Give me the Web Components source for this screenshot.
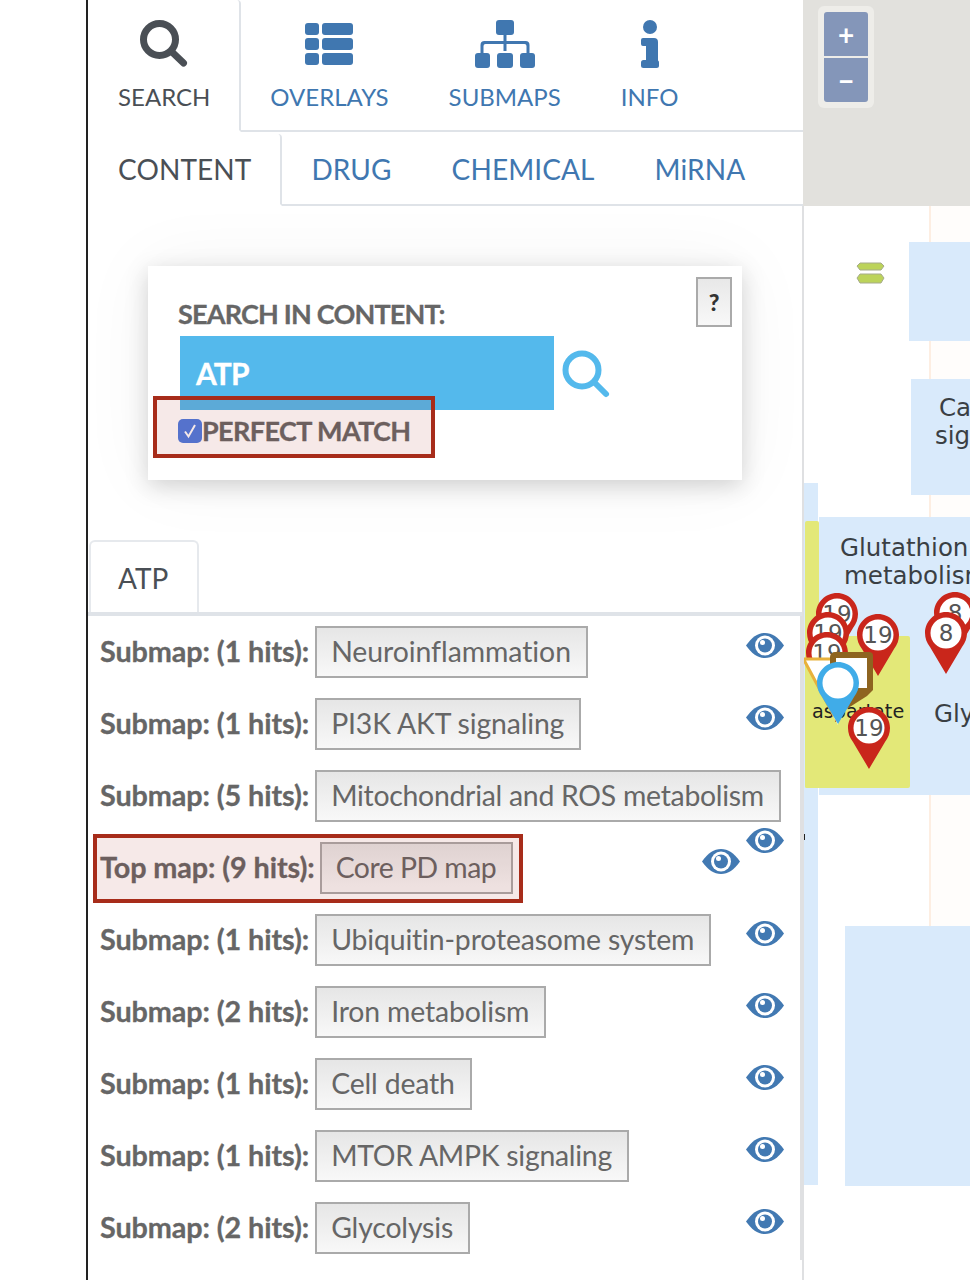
<!DOCTYPE html>
<html lang="en">
<head>
<meta charset="utf-8">
<title>Search</title>
<style>
  html, body { margin: 0; padding: 0; background: #fff; }
  body { font-family: 'Lato', 'Liberation Sans', sans-serif; }
</style>
</head>
<body>
<app-shell>
  <tab-bar slot="panel" size="top">
    <nav-tab active label="SEARCH" icon="search"></nav-tab>
    <nav-tab label="OVERLAYS" icon="overlays"></nav-tab>
    <nav-tab label="SUBMAPS" icon="submaps"></nav-tab>
    <nav-tab label="INFO" icon="info"></nav-tab>
  </tab-bar>
  <tab-bar slot="panel" size="sub">
    <nav-tab active label="CONTENT"></nav-tab>
    <nav-tab label="DRUG"></nav-tab>
    <nav-tab label="CHEMICAL"></nav-tab>
    <nav-tab label="MiRNA"></nav-tab>
  </tab-bar>
  <search-card slot="panel"></search-card>
  <result-tab slot="panel">ATP</result-tab>
  <hit-list slot="panel">
    <hit-row kind="Submap" hits="1" name="Neuroinflammation" track="-.05"></hit-row>
    <hit-row kind="Submap" hits="1" name="PI3K AKT signaling"></hit-row>
    <hit-row kind="Submap" hits="5" name="Mitochondrial and ROS metabolism" track="-.27" eye-top="58"></hit-row>
    <hit-row kind="Top map" hits="9" name="Core PD map" track="-.5" eye-right="60" highlight></hit-row>
    <hit-row kind="Submap" hits="1" name="Ubiquitin-proteasome system"></hit-row>
    <hit-row kind="Submap" hits="2" name="Iron metabolism"></hit-row>
    <hit-row kind="Submap" hits="1" name="Cell death"></hit-row>
    <hit-row kind="Submap" hits="1" name="MTOR AMPK signaling" track="-.26"></hit-row>
    <hit-row kind="Submap" hits="2" name="Glycolysis"></hit-row>
  </hit-list>
  <map-canvas slot="map"></map-canvas>
</app-shell>

<script>
const ICONS = {
  search: `<svg width="48" height="48" viewBox="0 0 48 48"><circle cx="19.5" cy="19.5" r="16" fill="none" stroke="currentColor" stroke-width="7"/><path d="M32 32l11.5 11" stroke="currentColor" stroke-width="7" stroke-linecap="round"/></svg>`,
  overlays: `<svg width="48" height="48" viewBox="0 0 48 42" fill="currentColor"><rect width="14" height="12" rx="3"/><rect x="17" width="31" height="12" rx="3"/><rect y="15" width="14" height="12" rx="3"/><rect x="17" y="15" width="31" height="12" rx="3"/><rect y="30" width="14" height="12" rx="3"/><rect x="17" y="30" width="31" height="12" rx="3"/></svg>`,
  submaps: `<svg width="60" height="48" viewBox="0 0 60 48" fill="currentColor"><rect x="21" width="18" height="15" rx="3"/><rect y="33" width="15" height="15" rx="3"/><rect x="22" y="33" width="16" height="15" rx="3"/><rect x="45" y="33" width="15" height="15" rx="3"/><path d="M28.500 15h3v6h19a4 4 0 0 1 4 4v8h-3v-7a2 2 0 0 0-2-2h-18v7h-3v-7h-18a2 2 0 0 0-2 2v7h-3v-8a4 4 0 0 1 4-4h19z"/></svg>`,
  info: `<svg width="18" height="48" viewBox="0 0 18 48" fill="currentColor"><circle cx="9" cy="7" r="7"/><path d="M2 18h11a4 4 0 0 1 4 4v20h-12V26H2a2 2 0 0 1-2-2v-4a2 2 0 0 1 2-2z"/><rect y="40" width="18" height="8" rx="2.500"/></svg>`
};

class AppShell extends HTMLElement {
  constructor() {
    super();
    this.attachShadow({ mode: 'open' });
    this.shadowRoot.innerHTML = `
      <style>
        :host { display: flex; width: 970px; height: 1280px; overflow: hidden; background: #fff; }
        .gutter { width: 86px; flex: none; border-right: 2px solid #222; }
        .panel { width: 716px; flex: none; display: flex; flex-direction: column; overflow: hidden; position: relative; }
        .panel::before { content: ''; position: absolute; right: 0; top: 0; width: 1px; height: 206px; background: #e2e1dd; }
        .panel::after { content: ''; position: absolute; right: 0; top: 206px; bottom: 0; width: 2px; background: #dfe0e2; }
        .map { width: 166px; flex: none; position: relative; }
      </style>
      <div class="gutter"></div>
      <div class="panel"><slot name="panel"></slot></div>
      <div class="map"><slot name="map"></slot></div>
    `;
  }
}

class TabBar extends HTMLElement {
  constructor() {
    super();
    this.attachShadow({ mode: 'open' });
    this.shadowRoot.innerHTML = `
      <style>
        :host { display: flex; box-sizing: border-box; border-bottom: 2px solid #dfe3e8; flex: none; }
        :host([size="top"]) { height: 132px; font-size: 24px; }
        :host([size="sub"]) { height: 74px; padding-top: 2px; font-size: 28px; letter-spacing: .1px; }
      </style>
      <slot></slot>
    `;
  }
}

class NavTab extends HTMLElement {
  constructor() {
    super();
    this.attachShadow({ mode: 'open' });
  }
  connectedCallback() {
    const icon = ICONS[this.getAttribute('icon')];
    this.shadowRoot.innerHTML = `
      <style>
        :host {
          display: flex; flex-direction: column; align-items: center; justify-content: center;
          box-sizing: content-box; padding: 0 30px; height: 100%; color: #4077b0; line-height: 1;
          position: relative; margin-bottom: -2px; border-bottom: 2px solid transparent;
        }
        :host([active]) {
          color: #4a4f55; background: #fff; border-right: 2px solid #dfe3e8; margin-right: -1px;
          border-bottom-color: #fff; padding-right: 29px; border-top-right-radius: 4px;
        }
        .ico { height: 48px; margin: -1px 0 17px; display: block; }
        svg { display: block; }
        .txt { white-space: nowrap; }
      </style>
      ${icon ? `<div class="ico">${icon}</div>` : ''}
      <span class="txt">${this.getAttribute('label')}</span>
    `;
  }
}

class SearchCard extends HTMLElement {
  constructor() {
    super();
    this.attachShadow({ mode: 'open' });
    this.shadowRoot.innerHTML = `
      <style>
        :host { display: block; flex: none; padding: 60px; height: 214px; }
        .card {
          position: relative; box-sizing: border-box; width: 594px; height: 214px; background: #fff;
          padding: 32px 30px 0; color: #666;
          box-shadow: 0 6px 22px rgba(0,0,0,.17), 0 0 70px rgba(0,0,0,.05);
        }
        .title { font-size: 27px; font-weight: 700; line-height: 32px; letter-spacing: -.8px; white-space: nowrap; -webkit-text-stroke: .3px #666; }
        .field { display: flex; align-items: center; margin: 6px 0 0 2px; }
        .input {
          box-sizing: border-box; width: 374px; height: 74px; background: #54b9ec; color: #fff;
          font-size: 30px; font-weight: 700; line-height: 74px; padding-left: 16px; letter-spacing: -.9px; -webkit-text-stroke: .3px #fff;
        }
        .go { display: block; margin: 4px 0 0 8px; color: #54b9ec; }
        .check { display: flex; align-items: center; height: 40px; font-size: 27px; font-weight: 700; letter-spacing: -.6px; white-space: nowrap; -webkit-text-stroke: .3px #666; }
        .box { width: 24px; height: 24px; flex: none; border-radius: 5px; background: #4c7be0; display: flex; align-items: center; justify-content: center; margin-top: 2px; }
        .help {
          position: absolute; top: 11px; right: 10px; box-sizing: border-box; width: 36px; height: 50px;
          border: 2px solid #aaa; background: linear-gradient(#e8e8e8, #f8f8f8);
          display: flex; align-items: center; justify-content: center;
          font-size: 23px; font-weight: 900; color: #333;
        }
        .mark {
          position: absolute; left: 5px; top: 130px; box-sizing: border-box; width: 282px; height: 62px;
          border: 4px solid #a72c1a; background: rgba(167,44,26,.1);
        }
      </style>
      <div class="card">
        <div class="title">SEARCH IN CONTENT:</div>
        <div class="field">
          <div class="input">ATP</div>
          <svg class="go" width="50" height="50" viewBox="0 0 50 50"><circle cx="20" cy="20" r="16.500" fill="none" stroke="currentColor" stroke-width="6"/><path d="M33 33l11 11" stroke="currentColor" stroke-width="6" stroke-linecap="round"/></svg>
        </div>
        <div class="check">
          <span class="box"><svg width="16" height="16" viewBox="0 0 16 16"><path d="M3 8.500l3.500 5L13 2" fill="none" stroke="#fff" stroke-width="2"/></svg></span>
          <span>PERFECT MATCH</span>
        </div>
        <div class="help">?</div>
        <div class="mark"></div>
      </div>
    `;
  }
}

class ResultTab extends HTMLElement {
  constructor() {
    super();
    this.attachShadow({ mode: 'open' });
    this.shadowRoot.innerHTML = `
      <style>
        :host { display: block; flex: none; height: 76px; box-sizing: border-box; border-bottom: 4px solid #dfe3e8; padding-left: 1px; }
        .tab {
          box-sizing: border-box; width: 110px; height: 72px; border: 2px solid #e6e9ed; border-bottom: none;
          border-radius: 6px 6px 0 0; padding-left: 27px; line-height: 72px; font-size: 28px; color: #4a4f55;
        }
      </style>
      <div class="tab"><slot></slot></div>
    `;
  }
}

class HitList extends HTMLElement {
  constructor() {
    super();
    this.attachShadow({ mode: 'open' });
    this.shadowRoot.innerHTML = `
      <style>
        :host { display: block; flex: none; box-sizing: border-box; height: 644px; width: 714px; padding: 10px 0 0 12px; border-right: 2px solid #dfe0e2; }
      </style>
      <slot></slot>
    `;
  }
}

class HitRow extends HTMLElement {
  constructor() {
    super();
    this.attachShadow({ mode: 'open' });
  }
  connectedCallback() {
    const eyeTop = this.getAttribute('eye-top') || 7;
    const eyeRight = this.getAttribute('eye-right') || 16;
    const track = this.getAttribute('track') || '-.15';
    const label = `${this.getAttribute('kind')}: (${this.getAttribute('hits')} hits):`;
    this.shadowRoot.innerHTML = `
      <style>
        :host { display: flex; align-items: center; gap: 6px; height: 52px; margin-bottom: 20px; position: relative; color: #666; white-space: nowrap; }
        :host([highlight]) { gap: 5px; }
        .lbl { font-size: 28.800px; font-weight: 700; letter-spacing: -.1px; -webkit-text-stroke: .3px #666; margin-bottom: 2px; }
        .btn {
          box-sizing: border-box; height: 52px; padding: 0 15px 0 14px; border: 2px solid #aaa;
          background: linear-gradient(#e6e6e6, #f8f8f8); font-size: 28.400px; line-height: 46px; letter-spacing: ${track}px;
        }
        .eye { position: absolute; top: ${eyeTop}px; right: ${eyeRight}px; display: block; }
        .mark {
          position: absolute; left: -7px; top: -8px; box-sizing: border-box; width: 430px; height: 69px;
          border: 4px solid #a72c1a; background: rgba(167,44,26,.1);
        }
      </style>
      <span class="lbl">${label}</span>
      <span class="btn">${this.getAttribute('name')}</span>
      <svg class="eye" width="38" height="25" viewBox="0 0 38 25"><path d="M0 12.500C6 4 12 0 19 0s13 4 19 12.500C32 21 26 25 19 25S6 21 0 12.500z" fill="#4279b2"/><circle cx="19" cy="12.500" r="10" fill="#fff"/><circle cx="19" cy="12.500" r="7" fill="#4279b2"/><circle cx="16.500" cy="9.500" r="2.500" fill="#fff"/></svg>
      ${this.hasAttribute('highlight') ? '<div class="mark"></div>' : ''}
    `;
  }
}

class MapPin extends HTMLElement {
  constructor() {
    super();
    this.attachShadow({ mode: 'open' });
  }
  connectedCallback() {
    const color = this.getAttribute('color') || '#c9261b';
    const label = this.getAttribute('label') || '';
    this.shadowRoot.innerHTML = `
      <style>
        :host { position: absolute; display: block; width: 44px; height: 64px; left: ${this.getAttribute('x') - 22}px; top: ${this.getAttribute('y') - 22}px; }
        svg { display: block; }
        text { font: 23px 'DejaVu Sans', sans-serif; fill: #555; text-anchor: middle; }
      </style>
      <svg width="44" height="64" viewBox="0 0 44 64">
        <path d="M22 1C10.400 1 1 10.400 1 22c0 5 1.800 10 5 14l16 27 16-27c3.200-4 5-9 5-14C43 10.400 33.600 1 22 1z" fill="${color}"/>
        <circle cx="22" cy="22" r="15.500" fill="#fff"/>
        <text x="22" y="30">${label}</text>
      </svg>
    `;
  }
}

class MapCanvas extends HTMLElement {
  constructor() {
    super();
    this.attachShadow({ mode: 'open' });
    // coordinates below are map coordinates: page x minus 804
    this.shadowRoot.innerHTML = `
      <style>
        :host { position: absolute; inset: 0; display: block; overflow: hidden; background: #fff; font: 24.500px/28px 'DejaVu Sans', sans-serif; color: #3a3f44; }
        .a { position: absolute; white-space: nowrap; }
        .top { left: 0; top: 0; width: 166px; height: 206px; background: #e2e1dd; }
        .line { left: 125px; top: 206px; width: 2px; height: 720px; background: #fdeee2; }
        .tint { left: 127px; top: 206px; width: 39px; height: 720px; background: #fffdfb; }
        .blue { background: #d9eafb; }
        .yellow { background: #e3e878; border-radius: 2px; }
        .zoom { left: 14px; top: 6px; width: 56px; height: 102px; box-sizing: border-box; padding: 6px; border-radius: 6px; background: #eeede9; display: flex; flex-direction: column; gap: 2px; }
        .zoom span { flex: 1; background: #8496b9; color: #fff; display: flex; align-items: center; justify-content: center; font: 700 28px/1 'Lato', sans-serif; }
        .zoom span:first-child { border-radius: 3px 3px 0 0; }
        .zoom span:last-child { border-radius: 0 0 3px 3px; }
        .lab { font-size: 19.200px; color: #222; }
      </style>
      <div class="a top"></div>
      <div class="a zoom"><span>+</span><span>−</span></div>
      <div class="a tint"></div>
      <div class="a line"></div>
      <div class="a blue" style="left:105px;top:242px;width:61px;height:99px"></div>
      <div class="a blue" style="left:107px;top:379px;width:59px;height:116px"></div>
      <div class="a blue" style="left:0;top:483px;width:14px;height:702px"></div>
      <div class="a blue" style="left:15px;top:517px;width:151px;height:278px"></div>
      <div class="a blue" style="left:41px;top:926px;width:125px;height:260px"></div>
      <div class="a yellow" style="left:1px;top:521px;width:14px;height:267px"></div>
      <div class="a yellow" style="left:1px;top:636px;width:105px;height:152px"></div>
      <svg class="a" style="left:52px;top:262px" width="30" height="23" viewBox="0 0 30 23">
        <path d="M4 1h21l3 3-3 4H4L1 4z" fill="#bcd35a" stroke="#a6ab8a"/><path d="M4 12h21l3 4-3 5H4l-3-5z" fill="#bcd35a" stroke="#a6ab8a"/>
      </svg>
      <div class="a" style="left:135px;top:394px">Ca</div>
      <div class="a" style="left:131px;top:422px">sig</div>
      <div class="a" style="left:36px;top:534px">Glutathion</div>
      <div class="a" style="left:40px;top:562px">metabolism</div>
      <div class="a lab" style="left:8px;top:698px">aspartate</div>
      <div class="a" style="left:130px;top:700px">Gly</div>
      <div class="a" style="left:0;top:834px;width:1px;height:6px;background:#222"></div>
      <map-pin x="33" y="614" label="19"></map-pin>
      <map-pin x="24" y="633" label="19"></map-pin>
      <map-pin x="23" y="653" label="19"></map-pin>
      <map-pin x="74" y="635" label="19"></map-pin>
      <map-pin x="151" y="613" label="8"></map-pin>
      <map-pin x="142" y="633" label="8"></map-pin>
      <svg class="a" style="left:0;top:650px" width="72" height="80" viewBox="0 0 72 80">
        <path d="M0 9h32l2 66z" fill="#fff"/>
        <path d="M0 9h32M0 10l30 56" fill="none" stroke="#e8b13b" stroke-width="3"/>
        <path d="M26 7a5 5 0 0 1 5-5h34a4 4 0 0 1 4 4v34l-6 6-22 14-15-18z" fill="#8e6420"/>
        <path d="M32 8h31v30H32z" fill="#fff"/>
      </svg>
      <map-pin x="34" y="683" color="#40ace8"></map-pin>
      <map-pin x="65" y="728" label="19"></map-pin>
    `;
  }
}

customElements.define('app-shell', AppShell);
customElements.define('tab-bar', TabBar);
customElements.define('nav-tab', NavTab);
customElements.define('search-card', SearchCard);
customElements.define('result-tab', ResultTab);
customElements.define('hit-list', HitList);
customElements.define('hit-row', HitRow);
customElements.define('map-pin', MapPin);
customElements.define('map-canvas', MapCanvas);
</script>
</body>
</html>
